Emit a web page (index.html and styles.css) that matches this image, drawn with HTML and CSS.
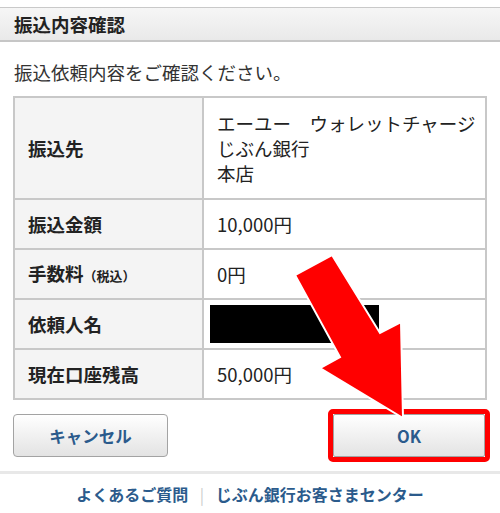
FILE: index.html
```html
<!DOCTYPE html>
<html lang="ja">
<head>
    <meta charset="UTF-8">
    <meta name="viewport" content="width=device-width, initial-scale=1.0">
    <title>振込内容確認</title>
    <link rel="stylesheet" href="styles.css">
</head>
<body>
    <div class="page-title">振込内容確認</div>
    <p class="lead">振込依頼内容をご確認ください。</p>

    <table class="confirm-table">
        <tr class="tall">
            <th>振込先</th>
            <td>エーユー　ウォレットチャージ<br>じぶん銀行<br>本店</td>
        </tr>
        <tr>
            <th>振込金額</th>
            <td>10,000円</td>
        </tr>
        <tr>
            <th>手数料<span class="small">（税込）</span></th>
            <td>0円</td>
        </tr>
        <tr>
            <th>依頼人名</th>
            <td><span class="masked"></span></td>
        </tr>
        <tr>
            <th>現在口座残高</th>
            <td>50,000円</td>
        </tr>
    </table>

    <div class="actions">
        <button class="btn btn-cancel">キャンセル</button>
        <div class="highlight-box">
            <button class="btn btn-ok">OK</button>
        </div>
    </div>

    <div class="separator"></div>

    <div class="footer-links">
        <a href="#">よくあるご質問</a>
        <span class="divider">|</span>
        <a href="#">じぶん銀行お客さまセンター</a>
    </div>

    <!-- annotation arrow -->
    <svg class="arrow" width="500" height="513" viewBox="0 0 500 513">
        <polygon points="295,275 332,255 380,333 401,322 403,418 320,368 340,357"
                 fill="#ff0000" stroke="#ffffff" stroke-width="2" stroke-linejoin="miter"/>
    </svg>
</body>
</html>
```

FILE: styles.css
```css
body {
    margin: 0;
    width: 500px;
    height: 513px;
    position: relative;
    background-color: #fff;
    color: #333;
    font-family: "Noto Sans CJK JP", "Noto Sans", sans-serif;
    font-size: 18.5px;
    overflow: hidden;
}
.page-title {
    margin-top: 7px;
    padding: 0 14px;
    height: 32px;
    line-height: 32px;
    font-weight: bold;
    color: #222;
    background: linear-gradient(#f6f6f6, #e9e9e9);
    border-top: 1px solid #c9c9c9;
    border-bottom: 2px solid #c6c6c6;
}
.lead {
    margin: 17px 14px 11px;
    height: 26px;
    line-height: 26px;
}
.confirm-table {
    margin: 0 13px;
    width: 474px;
    table-layout: fixed;
    border-collapse: collapse;
    border: 2px solid #c8c8c8;
}
.confirm-table tr {
    height: 50px;
}
.confirm-table tr.tall {
    height: 102px;
}
.confirm-table th,
.confirm-table td {
    border: 2px solid #c8c8c8;
    padding: 0 13px;
    line-height: 25px;
    text-align: left;
    vertical-align: middle;
    white-space: nowrap;
}
.confirm-table th {
    width: 161px;
    background-color: #f4f4f4;
    font-weight: bold;
    color: #222;
}
.confirm-table td {
    color: #222;
}
.small {
    font-size: 13px;
}
.masked {
    display: block;
    width: 169px;
    height: 38px;
    background: #000;
    margin-left: -7px;
}
.actions {
    margin-top: 9px;
    padding: 0 10px 0 13px;
    display: flex;
    justify-content: space-between;
    align-items: center;
}
.btn {
    height: 43px;
    border: 1px solid #a3a3a3;
    border-radius: 4px;
    background: linear-gradient(#ffffff, #e3e3e3);
    color: #2b5b8c;
    font-family: inherit;
    font-size: 16.5px;
    font-weight: bold;
    padding: 0;
}
.btn-cancel {
    width: 155px;
}
.highlight-box {
    border: 5px solid #ff0000;
    border-radius: 5px;
    display: flex;
}
.btn-ok {
    width: 152px;
    border-radius: 2px;
}
.separator {
    margin-top: 9px;
    height: 3px;
    background-color: #e8e8e8;
}
.footer-links {
    margin-top: 8px;
    text-align: center;
    height: 24px;
    line-height: 24px;
    font-size: 16px;
    font-weight: bold;
}
.footer-links a {
    color: #2b5b8c;
    text-decoration: none;
}
.divider {
    color: #cccccc;
    font-weight: normal;
    margin: 0 8px;
}
.arrow {
    position: absolute;
    left: 0;
    top: 0;
    pointer-events: none;
}
```
